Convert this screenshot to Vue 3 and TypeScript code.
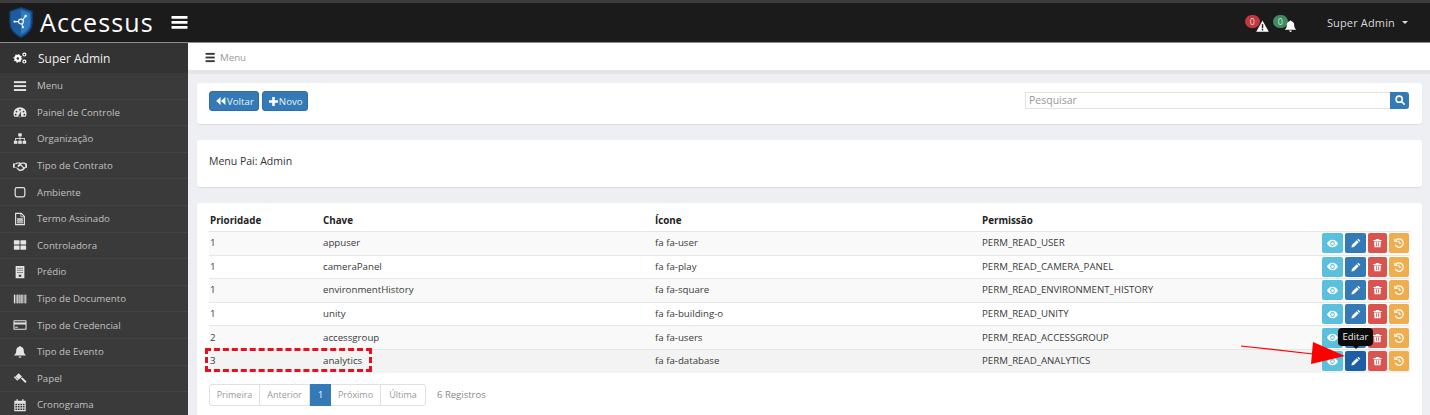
<script setup lang="ts">
interface Row { p: string; k: string; i: string; r: string }
const menu: { t: string; ic: string }[] = [
  { t: 'Menu', ic: 'bars' },
  { t: 'Painel de Controle', ic: 'dash' },
  { t: 'Organização', ic: 'site' },
  { t: 'Tipo de Contrato', ic: 'hand' },
  { t: 'Ambiente', ic: 'square' },
  { t: 'Termo Assinado', ic: 'file' },
  { t: 'Controladora', ic: 'th' },
  { t: 'Prédio', ic: 'build' },
  { t: 'Tipo de Documento', ic: 'barcode' },
  { t: 'Tipo de Credencial', ic: 'card' },
  { t: 'Tipo de Evento', ic: 'bell' },
  { t: 'Papel', ic: 'gavel' },
  { t: 'Cronograma', ic: 'cal' },
]
const rows: Row[] = [
  { p: '1', k: 'appuser', i: 'fa fa-user', r: 'PERM_READ_USER' },
  { p: '1', k: 'cameraPanel', i: 'fa fa-play', r: 'PERM_READ_CAMERA_PANEL' },
  { p: '1', k: 'environmentHistory', i: 'fa fa-square', r: 'PERM_READ_ENVIRONMENT_HISTORY' },
  { p: '1', k: 'unity', i: 'fa fa-building-o', r: 'PERM_READ_UNITY' },
  { p: '2', k: 'accessgroup', i: 'fa fa-users', r: 'PERM_READ_ACCESSGROUP' },
  { p: '3', k: 'analytics', i: 'fa fa-database', r: 'PERM_READ_ANALYTICS' },
]
</script>

<template>
  <div class="page">
    <header class="top">
      <div class="brand">
        <svg class="shield" viewBox="0 0 28 34">
          <path d="M14 1 L26 5 V17 C26 25 20 30 14 33 C8 30 2 25 2 17 V5 Z" fill="#1d5c9e" stroke="#123f70" stroke-width="1.4" />
          <path d="M14 3.5 L24 7 V17 C24 23 19 27.5 14 30 Z" fill="#2d7cc4" />
          <g stroke="#fff" stroke-width="1.2" fill="none">
            <circle cx="14" cy="16" r="2.6" />
            <path d="M11.5 16 H7 M16 14 L19 10 M15 18.5 L16 22" />
          </g>
          <g fill="#fff"><circle cx="7" cy="16" r="1.2" /><circle cx="19" cy="10" r="1.3" /><circle cx="16" cy="22" r="1.2" /></g>
        </svg>
        <span class="name">Accessus</span>
        <svg class="burger" viewBox="0 0 16 13" fill="#fff"><rect width="16" height="2.8" rx=".5" /><rect y="5" width="16" height="2.8" rx=".5" /><rect y="10" width="16" height="2.8" rx=".5" /></svg>
      </div>
      <div class="top-right">
        <div class="notice">
          <span class="badge red">0</span>
          <svg class="n-ic" viewBox="0 0 14 13"><path d="M7 0.5 L13.8 12.6 H0.2 Z" fill="#fff" /><rect x="6.2" y="4.5" width="1.6" height="4.6" fill="#222" /><rect x="6.2" y="9.8" width="1.6" height="1.6" fill="#222" /></svg>
        </div>
        <div class="notice second">
          <span class="badge green">0</span>
          <svg class="n-ic" viewBox="0 0 14 13" fill="#fff"><path d="M7 .5c.6 0 1 .4 1 .9 2.2.4 3 2.2 3 4.2 0 2.6 1 3.7 2.4 5H.6C2 9.300 3 8.200 3 5.600c0-2 .8-3.800 3-4.200 0-.5.4-.9 1-.9zM5.500 11.500h3a1.500 1.500 0 0 1-3 0z" /></svg>
        </div>
        <span class="user">Super Admin</span>
        <i class="caret"></i>
      </div>
    </header>

    <div class="body">
      <aside class="side">
        <div class="side-head">
          <svg class="side-ic" viewBox="0 0 16 16" fill="none" stroke="#fff">
            <circle cx="5.500" cy="8.500" r="2.800" stroke-width="2.600" />
            <circle cx="5.500" cy="8.500" r="4.600" stroke-width="1.100" stroke-dasharray="1.400 2.200" />
            <circle cx="13" cy="4" r="1.700" stroke-width="1.400" />
            <circle cx="13" cy="12" r="1.700" stroke-width="1.400" />
          </svg>
          <span>Super Admin</span>
        </div>
        <nav>
          <a v-for="m in menu" :key="m.t" class="item">
            <svg class="side-ic" viewBox="0 0 16 16" fill="#e4e4e4">
              <template v-if="m.ic === 'bars'"><rect x="1" y="2.500" width="14" height="2.200" /><rect x="1" y="7" width="14" height="2.200" /><rect x="1" y="11.500" width="14" height="2.200" /></template>
              <template v-else-if="m.ic === 'dash'"><path fill-rule="evenodd" d="M8 2.500a7.500 7.500 0 0 1 7.500 7.500c0 1.500-.4 2.700-1 3.500h-13c-.6-.8-1-2-1-3.500A7.500 7.500 0 0 1 8 2.500zM8 4.500a1 1 0 1 0 0 2 1 1 0 0 0 0-2zM4 6.500a1 1 0 1 0 0 2 1 1 0 0 0 0-2zM12 6.500a1 1 0 1 0 0 2 1 1 0 0 0 0-2zM3 10a1 1 0 1 0 0 2 1 1 0 0 0 0-2zM13 10a1 1 0 1 0 0 2 1 1 0 0 0 0-2zM9 7l-2 4a1.500 1.500 0 1 0 2 .5z" /></template>
              <template v-else-if="m.ic === 'site'"><rect x="6" y="1.500" width="4" height="3.500" /><rect x="7.500" y="5" width="1" height="2.500" /><rect x="2.500" y="7" width="11" height="1" /><rect x="2.500" y="7" width="1" height="3" /><rect x="7.500" y="7" width="1" height="3" /><rect x="12.500" y="7" width="1" height="3" /><rect x="1" y="10" width="4" height="3.500" /><rect x="6" y="10" width="4" height="3.500" /><rect x="11" y="10" width="4" height="3.500" /></template>
              <template v-else-if="m.ic === 'hand'"><path d="M0 5h2.500l2-1h3.500l1 .6 1-.6h3l2.500 1h.5v5h-1.500l-3.500 3.500h-2l-1 .4-2-1-2.500-2.900H0z" /><path fill="#3a3a3a" d="M2 6h1.500l2-1h2L5 8l1 1.300 2.500-2 3 3-1 1.500H9l-1 .5-2.500-2L3 9.500H2zM9.500 5.500h2.800l1.700.7v2.800l-1.500.3-3-3z" /></template>
              <template v-else-if="m.ic === 'square'"><rect x="2.500" y="3" width="11" height="10.500" rx="2" fill="none" stroke="#e4e4e4" stroke-width="1.400" /></template>
              <template v-else-if="m.ic === 'file'"><path d="M3 1.500h6.500l3.500 3.500v9.500H3z" fill="none" stroke="#e4e4e4" stroke-width="1.300" /><path d="M9 1.500v4h4M5 7.500h6v1H5zM5 9.500h6v1H5zM5 11.500h6v1H5z" fill="none" stroke="#e4e4e4" stroke-width=".9" /></template>
              <template v-else-if="m.ic === 'th'"><rect x="1" y="2.500" width="6.500" height="5" rx=".6" /><rect x="8.500" y="2.500" width="6.500" height="5" rx=".6" /><rect x="1" y="8.500" width="6.500" height="5" rx=".6" /><rect x="8.500" y="8.500" width="6.500" height="5" rx=".6" /></template>
              <template v-else-if="m.ic === 'build'"><path fill-rule="evenodd" d="M3 1h10v14H3zM5 3v1.200h1.300V3zM7.400 3v1.200h1.300V3zM9.700 3v1.200H11V3zM5 5.500v1.200h1.300V5.500zM7.400 5.500v1.200h1.300V5.500zM9.700 5.500v1.200H11V5.500zM5 8v1.200h1.300V8zM7.400 8v1.200h1.300V8zM9.700 8v1.200H11V8zM6.500 11v2.500h3V11z" /></template>
              <template v-else-if="m.ic === 'barcode'"><rect x="1" y="3" width="1.500" height="10" /><rect x="3.200" y="3" width=".8" height="10" /><rect x="4.800" y="3" width="1.500" height="10" /><rect x="7" y="3" width=".8" height="10" /><rect x="8.500" y="3" width="1.500" height="10" /><rect x="10.700" y="3" width=".8" height="10" /><rect x="12.200" y="3" width="1" height="10" /><rect x="14" y="3" width="1.200" height="10" /></template>
              <template v-else-if="m.ic === 'card'"><path fill-rule="evenodd" d="M1.500 2.500h13a1 1 0 0 1 1 1v9a1 1 0 0 1-1 1h-13a1 1 0 0 1-1-1v-9a1 1 0 0 1 1-1zM1.700 7.500v4.800h12.600V7.500zM2.500 10h3v1h-3zM1.700 3.700v1.300h12.600V3.700z" /></template>
              <template v-else-if="m.ic === 'bell'"><path d="M8 1c.6 0 1 .4 1 .9 2.400.4 3.300 2.400 3.300 4.500 0 3 1 4.200 2.700 5.600H1c1.700-1.400 2.700-2.600 2.700-5.600 0-2.100.9-4.100 3.300-4.500C7 1.400 7.400 1 8 1zM6.300 13h3.400a1.700 1.700 0 0 1-3.400 0z" /></template>
              <template v-else-if="m.ic === 'gavel'"><path d="M6.500 2.500l3.800 3.800-3.800 3.800-3.800-3.800zM9 8.500l1.500-1.500 5 5-1.500 1.800z" /><path d="M1 7l1-1 4 4-1 1z" /></template>
              <template v-else><path fill-rule="evenodd" d="M1.500 3H4V1.500h1.500V3h5V1.500H12V3h2.500v12h-13zM2.700 6.500v1.700h2V6.500zM5.500 6.500v1.700h2V6.500zM8.400 6.500v1.700h2V6.500zM11.200 6.500v1.700h2V6.500zM2.700 9.200v1.700h2V9.200zM5.500 9.200v1.700h2V9.200zM8.400 9.200v1.700h2V9.200zM11.200 9.200v1.700h2V9.200zM2.700 11.900v1.800h2v-1.800zM5.500 11.900v1.800h2v-1.800zM8.400 11.900v1.800h2v-1.800zM11.200 11.900v1.800h2v-1.800z" /></template>
            </svg>
            <span>{{ m.t }}</span>
          </a>
        </nav>
      </aside>

      <main class="main">
        <div class="crumb">
          <svg class="crumb-ic" viewBox="0 0 14 12" fill="#333"><rect width="10" height="2" y="1" /><rect width="10" height="2" y="5" /><rect width="10" height="2" y="9" /></svg>
          <span>Menu</span>
        </div>
        <div class="content">
          <section class="panel toolbar">
            <div class="btns">
              <button class="btn">
                <svg viewBox="0 0 12 10" class="b-ic" fill="#fff"><path d="M5.500 0v10L0 5zM11.500 0v10L6 5z" /></svg>Voltar
              </button>
              <button class="btn">
                <svg viewBox="0 0 10 10" class="b-ic plus" fill="#fff"><path d="M3.600 0h2.800v3.600H10v2.800H6.400V10H3.600V6.400H0V3.600h3.600z" /></svg>Novo
              </button>
            </div>
            <div class="search">
              <div class="input">Pesquisar</div>
              <div class="s-btn">
                <svg viewBox="0 0 12 12" width="10" height="10" fill="none" stroke="#fff" stroke-width="1.900"><circle cx="5" cy="5" r="3.700" /><path d="M7.800 7.800L11 11" stroke-linecap="round" /></svg>
              </div>
            </div>
          </section>

          <section class="panel parent">Menu Pai: Admin</section>

          <section class="panel list">
            <table>
              <colgroup><col class="c1" /><col class="c2" /><col class="c3" /><col class="c4" /><col /></colgroup>
              <thead>
                <tr><th>Prioridade</th><th>Chave</th><th>Ícone</th><th>Permissão</th><th></th></tr>
              </thead>
              <tbody>
                <tr v-for="(r, i) in rows" :key="r.k" :class="{ odd: i % 2 === 0, hov: i === 5 }">
                  <td>{{ r.p }}</td>
                  <td>{{ r.k }}</td>
                  <td>{{ r.i }}</td>
                  <td>{{ r.r }}</td>
                  <td class="acts">
                    <div class="acts-in">
                      <span class="a info">
                        <svg viewBox="0 0 16 12" width="11" height="9" fill="#fff"><path fill-rule="evenodd" d="M8 0.500C11.500.5 14.300 2.700 16 6c-1.700 3.300-4.500 5.500-8 5.500S1.700 9.300 0 6C1.700 2.700 4.500.5 8 .5zM8 2.500a3.500 3.500 0 1 0 0 7 3.500 3.500 0 0 0 0-7z" /><circle cx="8" cy="6" r="2" /></svg>
                      </span>
                      <span class="a primary">
                        <svg viewBox="0 0 12 12" width="10" height="10" fill="#fff"><path d="M8.800.8l2.400 2.400-1.200 1.200L7.600 2zM6.900 2.700l2.400 2.400-5.800 5.800L.5 11.500l.6-3z" /></svg>
                      </span>
                      <span class="a danger">
                        <svg viewBox="0 0 12 12" width="9" height="10" fill="#fff"><path fill-rule="evenodd" d="M4 .5h4l.7 1.500H11.500v1.300h-11V2h2.800zM1.500 4h9l-.5 7.500H2zM4 5v5.300h1V5zM7 5v5.300h1V5z" /></svg>
                      </span>
                      <span class="a warning">
                        <svg viewBox="0 0 12 12" width="10" height="10" fill="none" stroke="#fff" stroke-width="1.500"><path d="M2 3.200A5 5 0 1 1 1.500 8.200" /><path d="M1 .8v3.200h3.200" stroke-width="1.300" /><path d="M6 3.200V6.300H8.500" stroke-width="1.200" /></svg>
                      </span>
                    </div>
                  </td>
                </tr>
              </tbody>
            </table>
            <div class="pager">
              <div class="pages">
                <span class="pg w50">Primeira</span><span class="pg w50">Anterior</span><span class="pg cur">1</span><span class="pg w50">Próximo</span><span class="pg w44">Última</span>
              </div>
              <span class="count">6 Registros</span>
            </div>
            <div class="dashed"></div>
            <div class="tip">Editar</div>
            <svg class="arrow" viewBox="0 0 110 30" width="110" height="30">
              <path d="M0 6 L72 14" stroke="#ff0000" stroke-width="1.200" fill="none" />
              <path d="M72 2 L104 16 L70 24 Z" fill="#ff0000" />
            </svg>
          </section>
        </div>
      </main>
    </div>
  </div>
</template>

<style>
html, body { margin: 0; padding: 0; overflow: hidden; }
</style>

<style scoped>
.page {
  width: 1430px;
  height: 415px;
  overflow: hidden;
  font-family: "Open Sans", "DejaVu Sans", sans-serif;
  font-size: 10px;
  color: #333;
  background: #eeeff3;
}
.top {
  height: 39px;
  border-top: 3px solid #3d3d3d;
  border-bottom: 1px solid #8d8d8d;
  background: #1b1b1b;
  display: flex;
  justify-content: space-between;
  align-items: center;
}
.brand { display: flex; align-items: center; padding-left: 8px; }
.shield { width: 26px; height: 33px; }
.name {
  margin-left: 6px;
  font-size: 25px;
  letter-spacing: 1.1px;
  color: #fff;
  line-height: 39px;
}
.burger { width: 17px; height: 13px; margin-left: 17px; }
.top-right { display: flex; align-items: center; padding-right: 22px; color: #ddd; }
.notice { position: relative; width: 27px; height: 20px; }
.notice.second { margin-left: 1px; width: 54px; }
.badge {
  position: absolute;
  left: 0;
  top: 2px;
  width: 15px;
  height: 13px;
  border-radius: 7px;
  font-size: 9px;
  line-height: 13px;
  text-align: center;
  color: #e8d0d0;
}
.badge.red { background: #c0393d; }
.badge.green { background: #3f8a5f; color: #d0e8d8; }
.n-ic { position: absolute; left: 11px; top: 7px; width: 13px; height: 12px; }
.user { font-size: 11px; letter-spacing: .15px; color: #d8d8d8; }
.caret {
  margin-left: 7px;
  width: 0; height: 0;
  border-left: 3px solid transparent;
  border-right: 3px solid transparent;
  border-top: 3px solid #ddd;
}
.body { display: flex; height: 372px; }
.side {
  width: 188px;
  flex: none;
  background: #3a3a3a;
  color: #c0c0c0;
  overflow: hidden;
}
.side-head {
  height: 30px;
  display: flex;
  align-items: center;
  background: #333;
  color: #eee;
  font-size: 12px;
  padding-left: 13px;
}
.side-head span { margin-left: 11px; }
.side-ic { width: 14px; height: 14px; flex: none; }
.item {
  height: 25.6px;
  display: flex;
  align-items: center;
  padding-left: 13px;
  border-bottom: 1px solid #424242;
  font-size: 9.7px;
}
.item span { margin-left: 10px; }
.main { flex: 1; min-width: 0; display: flex; flex-direction: column; }
.crumb {
  flex: none;
  height: 24px;
  padding-top: 2px;
  padding-bottom: 1px;
  background: #fff;
  border-bottom: 4px solid #e4e4e4;
  display: flex;
  align-items: center;
  padding-left: 17px;
  color: #999;
  font-size: 9.7px;
}
.crumb-ic { width: 14px; height: 11px; margin-right: 1px; }
.content { padding: 9px 8px 0 9px; display: flex; flex-direction: column; gap: 16px; }
.panel {
  background: #fff;
  border-radius: 3px;
  box-shadow: 0 1px 1px rgba(0, 0, 0, .08);
  flex: none;
}
.toolbar {
  height: 41px;
  display: flex;
  justify-content: space-between;
  align-items: center;
  padding: 0 13px 5px 12px;
  box-sizing: border-box;
}
.btns { display: flex; gap: 3px; }
.btn {
  height: 20px;
  padding: 0 4px 0 6px;
  display: flex;
  align-items: center;
  background: #337ab7;
  border: 1px solid #2e6da4;
  border-radius: 3px;
  color: #e8f0f8;
  font: 9.7px "Open Sans", sans-serif;
}
.b-ic { width: 10px; height: 8px; margin-right: 1px; }
.b-ic.plus { width: 9px; height: 9px; }
.search { display: flex; margin-bottom: 2px; }
.input {
  width: 365px;
  height: 17px;
  box-sizing: border-box;
  border: 1px solid #e2e2e2;
  border-right: 0;
  font-size: 10.500px;
  line-height: 15px;
  padding-left: 3px;
  color: #999;
}
.s-btn {
  width: 19px;
  height: 17px;
  background: #337ab7;
  border-radius: 0 3px 3px 0;
  display: flex;
  align-items: center;
  justify-content: center;
}
.parent {
  height: 47px;
  display: flex;
  align-items: center;
  padding-left: 12px;
  font-size: 10.5px;
  padding-bottom: 5px;
  box-sizing: border-box;
}
.list { position: relative; padding: 10px 12px 0; height: 230px; box-sizing: border-box; }
table { width: 1201px; border-collapse: separate; border-spacing: 0; table-layout: fixed; margin-right: 0; }
.c1 { width: 113px; }
.c2 { width: 332px; }
.c3 { width: 327px; }
.c4 { width: 320px; }
th {
  height: 15px;
  text-align: left;
  font-weight: 700;
  font-size: 9.8px;
  padding: 0 1px 3px;
  color: #222;
}
td {
  height: 21.600px;
  padding: 0 1px 1px;
  border-top: 1px solid #e6e6e6;
  font-size: 9.7px;
  color: #3a3a3a;
}
td.acts { padding: 0 1px; height: 22.600px; }
tr.odd td { background: #f9f9f9; }
tr.hov td { background: #f3f3f3; }
.acts-in { display: flex; justify-content: flex-end; gap: 2px; }
.a {
  height: 20px;
  width: 20px;
  border-radius: 2px;
  display: flex;
  align-items: center;
  justify-content: center;
}
.a.info { background: #5bc0de; width: 21px; }
.a.primary { background: #337ab7; width: 21px; }
.a.danger { background: #d9534f; width: 19px; }
.a.warning { background: #f0ad4e; }
tr.hov .a.primary { background: #1d5fa5; }
.pager { display: flex; align-items: center; margin-top: 11px; }
.pages {
  display: flex;
  height: 22px;
  border: 1px solid #e0e0e0;
  border-radius: 3px;
  box-sizing: border-box;
  color: #999;
  font-size: 9px;
}
.pg {
  display: flex;
  align-items: center;
  justify-content: center;
  border-right: 1px solid #e0e0e0;
  box-sizing: border-box;
}
.w50 { width: 50px; }
.w44 { width: 44px; border-right: 0; }
.cur { width: 21px; background: #337ab7; color: #fff; border-right: 0; margin: -1px 0; }
.count { margin-left: 11px; color: #888; font-size: 9.5px; }
.dashed {
  position: absolute;
  left: 8px;
  top: 145px;
  width: 167px;
  height: 24px;
  box-sizing: border-box;
  border: 3px dashed #e8101c;
}
.tip {
  position: absolute;
  left: 1141px;
  top: 125px;
  width: 35px;
  height: 18px;
  border-radius: 4px;
  background: #0c0c0c;
  color: #eee;
  font-size: 9.500px;
  line-height: 17px;
  text-align: center;
}
.tip::after {
  content: "";
  position: absolute;
  left: 15px;
  bottom: -3px;
  border-left: 3px solid transparent;
  border-right: 3px solid transparent;
  border-top: 3px solid #0c0c0c;
}
.arrow { position: absolute; left: 1044px; top: 137px; overflow: visible; }
</style>
